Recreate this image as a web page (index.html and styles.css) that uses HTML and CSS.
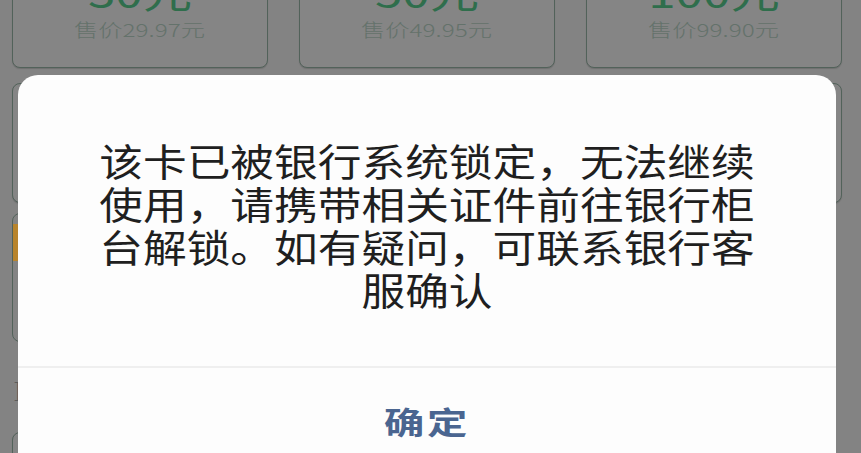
FILE: index.html
```html
<!DOCTYPE html>
<html lang="zh-CN">
<head>
  <meta charset="UTF-8" />
  <meta name="viewport" content="width=device-width, initial-scale=1.0"/>
  <title>充值</title>
  <link rel="stylesheet" href="styles.css">
</head>
<body>
  <div class="page">
    <div class="cards">
      <div class="card">
        <div class="amount">30元</div>
        <div class="price"><span>售价29.97元</span></div>
      </div>
      <div class="card">
        <div class="amount">50元</div>
        <div class="price"><span>售价49.95元</span></div>
      </div>
      <div class="card">
        <div class="amount">100元</div>
        <div class="price"><span>售价99.90元</span></div>
      </div>

      <div class="card tall"></div>
      <div class="card tall"></div>
      <div class="card tall"></div>
    </div>

    <div class="pay">
      <div class="pay-item"><span class="badge"></span></div>
    </div>
    <div class="note">]</div>
    <div class="cards more">
      <div class="card"></div>
    </div>
  </div>

  <!-- dialog over the page -->
  <div class="mask">
    <div class="dialog">
      <div class="dialog-body">
        <p class="msg">该卡已被银行系统锁定，无法继续使用，请携带相关证件前往银行柜台解锁。如有疑问，可联系银行客服确认</p>
      </div>
      <div class="dialog-footer">
        <button class="ok">确定</button>
      </div>
    </div>
  </div>
</body>
</html>
```

FILE: styles.css
```css
body {
  margin: 0;
  background: #838383;
  font-family: "Noto Sans CJK SC", "Noto Sans", sans-serif;
  overflow: hidden;
  height: 453px;
}

.page {
  margin-top: -44px;
  padding: 0 19px 0 12px;
}

.cards {
  display: grid;
  grid-template-columns: repeat(3, 1fr);
  column-gap: 31px;
  row-gap: 15px;
}

.card {
  height: 112px;
  border: 1px solid #52625a;
  border-radius: 8px;
  background: #858585;
  box-shadow: 0 1px 1px rgba(0,0,0,0.15);
  text-align: center;
  box-sizing: border-box;
}

.card.tall {
  height: 120px;
}

.amount {
  font-size: 38px;
  line-height: 40px;
  color: #2f6e4c;
  margin-top: 15px;
  transform: scaleX(1.3);
}

.price {
  font-size: 18px;
  line-height: 20px;
  color: #64726b;
  font-weight: 300;
  margin-top: 7px;
}

.price span {
  display: inline-block;
  transform: scaleX(1.35);
}

.pay {
  display: grid;
  grid-template-columns: repeat(3, 1fr);
  column-gap: 31px;
  margin-top: 10px;
}

.pay-item {
  height: 127px;
  border: 1px solid #52625a;
  border-radius: 8px;
  position: relative;
}

.badge {
  position: absolute;
  left: 0;
  top: 10px;
  width: 7px;
  height: 37px;
  background: #b8842c;
}

.note {
  color: #5b5b5b;
  font-size: 20px;
  line-height: 30px;
  margin: 33px 0 0 2px;
  height: 30px;
}

.cards.more {
  margin-top: 27px;
}

.mask {
  position: absolute;
  left: 0;
  top: 0;
  width: 100%;
  height: 100%;
}

.dialog {
  position: absolute;
  left: 18px;
  top: 75px;
  width: 818px;
  height: 420px;
  background: #fdfdfd;
  border-radius: 20px;
  overflow: hidden;
}

.dialog-body {
  height: 293px;
  box-sizing: border-box;
  padding-top: 63px;
  text-align: center;
  border-bottom: 2px solid #efefef;
}

.msg {
  display: inline-block;
  width: 572px;
  margin: 0;
  font-size: 38px;
  line-height: 43px;
  color: #1f1f1f;
  text-align: center;
  transform: scaleX(1.15);
}

.dialog-footer {
  text-align: center;
}

.ok {
  border: none;
  background: none;
  font-family: inherit;
  font-size: 31px;
  line-height: 40px;
  font-weight: bold;
  color: #4a6590;
  margin-top: 33px;
  padding: 0;
  letter-spacing: 2px;
  transform: scaleX(1.3);
}
```
